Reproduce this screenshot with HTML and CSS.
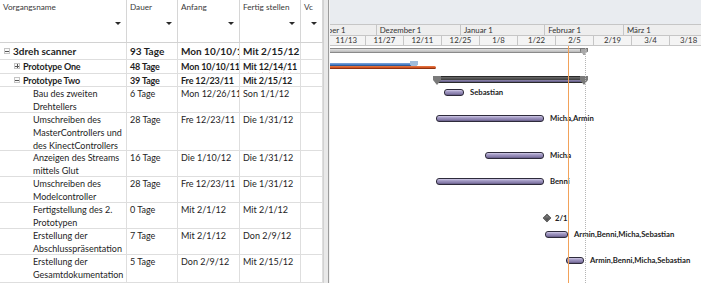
FILE: index.html
```html
<!DOCTYPE html>
<html lang="de">
<head>
    <meta charset="UTF-8">
    <title>3dreh scanner - Gantt</title>
    <link rel="stylesheet" href="styles.css">
</head>
<body>
<div class="app">
    <div class="sheet">
        <div class="row head">
            <div class="cell">Vorgangsname<span class="caret"></span></div>
            <div class="cell">Dauer<span class="caret"></span></div>
            <div class="cell">Anfang<span class="caret"></span></div>
            <div class="cell">Fertig stellen<span class="caret"></span></div>
            <div class="cell">Vc<span class="caret"></span></div>
        </div>
        <div class="row project h-top">
            <div class="cell name lvl0"><span class="toggle minus"></span>3dreh scanner</div>
            <div class="cell">93 Tage</div>
            <div class="cell">Mon 10/10/11</div>
            <div class="cell">Mit 2/15/12</div>
            <div class="cell"></div>
        </div>
        <div class="row summary h-14">
            <div class="cell name lvl1"><span class="toggle plus"></span>Prototype One</div>
            <div class="cell">48 Tage</div>
            <div class="cell">Mon 10/10/11</div>
            <div class="cell"><span class="typo">Mit 12/14/11</span></div>
            <div class="cell"></div>
        </div>
        <div class="row summary h-13">
            <div class="cell name lvl1"><span class="toggle minus"></span>Prototype Two</div>
            <div class="cell">39 Tage</div>
            <div class="cell">Fre 12/23/11</div>
            <div class="cell">Mit 2/15/12</div>
            <div class="cell"></div>
        </div>
        <div class="row h-2">
            <div class="cell name lvl2">Bau des zweiten Drehtellers</div>
            <div class="cell">6 Tage</div>
            <div class="cell">Mon 12/26/11</div>
            <div class="cell">Son 1/1/12</div>
            <div class="cell"></div>
        </div>
        <div class="row h-3">
            <div class="cell name lvl2">Umschreiben des MasterControllers und des KinectControllers</div>
            <div class="cell">28 Tage</div>
            <div class="cell">Fre 12/23/11</div>
            <div class="cell">Die 1/31/12</div>
            <div class="cell"></div>
        </div>
        <div class="row h-2">
            <div class="cell name lvl2">Anzeigen des Streams mittels Glut</div>
            <div class="cell">16 Tage</div>
            <div class="cell">Die 1/10/12</div>
            <div class="cell">Die 1/31/12</div>
            <div class="cell"></div>
        </div>
        <div class="row h-2">
            <div class="cell name lvl2">Umschreiben des Modelcontroller</div>
            <div class="cell">28 Tage</div>
            <div class="cell">Fre 12/23/11</div>
            <div class="cell">Die 1/31/12</div>
            <div class="cell"></div>
        </div>
        <div class="row h-2">
            <div class="cell name lvl2">Fertigstellung des 2. Prototypen</div>
            <div class="cell">0 Tage</div>
            <div class="cell">Mit 2/1/12</div>
            <div class="cell">Mit 2/1/12</div>
            <div class="cell"></div>
        </div>
        <div class="row h-2">
            <div class="cell name lvl2">Erstellung der Abschlusspräsentation</div>
            <div class="cell">7 Tage</div>
            <div class="cell">Mit 2/1/12</div>
            <div class="cell">Don 2/9/12</div>
            <div class="cell"></div>
        </div>
        <div class="row h-last">
            <div class="cell name lvl2">Erstellung der Gesamtdokumentation</div>
            <div class="cell">5 Tage</div>
            <div class="cell">Don 2/9/12</div>
            <div class="cell">Mit 2/15/12</div>
            <div class="cell"></div>
        </div>
    </div>

    <div class="splitter"></div>

    <div class="chart">
        <div class="ts-top"></div>
        <div class="ts-row months">
            <span class="first" style="--days:30">November 1</span>
            <span style="--days:31">Dezember 1</span>
            <span style="--days:31">Januar 1</span>
            <span style="--days:29">Februar 1</span>
            <span style="--days:31">März 1</span>
        </div>
        <div class="ts-row weeks">
            <span class="first">11/13</span>
            <span>11/27</span>
            <span>12/11</span>
            <span>12/25</span>
            <span>1/8</span>
            <span>1/22</span>
            <span>2/5</span>
            <span>2/19</span>
            <span>3/4</span>
            <span>3/18</span>
        </div>

        <div class="gantt">
            <div class="g-row g-first">
                <div class="bar project-bar" style="width:255px"></div>
            </div>
            <div class="g-row h-14">
                <div class="stack">
                    <div class="bar baseline" style="width:84px"></div>
                    <div class="bar actual" style="width:106px"></div>
                </div>
            </div>
            <div class="g-row h-13">
                <div class="bar summary-bar" style="margin-left:106px;width:149px"></div>
            </div>
            <div class="g-row h-2">
                <div class="bar task" style="margin-left:114px;width:20px"></div>
                <span class="tag">Sebastian</span>
            </div>
            <div class="g-row h-3">
                <div class="bar task" style="margin-left:106px;width:108px"></div>
                <span class="tag">Micha,Armin</span>
            </div>
            <div class="g-row h-2 tight">
                <div class="bar task" style="margin-left:155px;width:59px"></div>
                <span class="tag">Micha</span>
            </div>
            <div class="g-row h-2 tight">
                <div class="bar task" style="margin-left:106px;width:108px"></div>
                <span class="tag">Benni</span>
            </div>
            <div class="g-row h-2 milestone-row">
                <div class="milestone" style="margin-left:214px"></div>
                <span class="tag">2/1</span>
            </div>
            <div class="g-row h-2">
                <div class="bar task" style="margin-left:215px;width:23px"></div>
                <span class="tag">Armin,Benni,Micha,Sebastian</span>
            </div>
            <div class="g-row h-last">
                <div class="bar task" style="margin-left:236px;width:18px"></div>
                <span class="tag">Armin,Benni,Micha,Sebastian</span>
            </div>

            <div class="status-line" style="left:238px"></div>
            <div class="finish-line" style="left:255px"></div>
        </div>
    </div>
</div>
</body>
</html>
```

FILE: styles.css
```css
/* Project view: task sheet on the left, gantt chart on the right */
:root {
    --day: 2.717px;          /* timescale: pixels per day */
    --grid: #dedede;
    --scale-line: #c6c6c6;
    --text: #1e1e1e;
    --bar-edge: #2e2b3b;
    --status: #f2a25a;
}

* {
    box-sizing: border-box;
    margin: 0;
    padding: 0;
}

body {
    font-family: Lato, "Liberation Sans", sans-serif;
    font-size: 9px;
    color: var(--text);
    background: #fff;
    overflow: hidden;
}

.app {
    display: flex;
    height: 283px;
}

/* ---------- task sheet ---------- */
.sheet {
    width: 323px;
    flex: none;
}

.row {
    display: grid;
    grid-template-columns: 127px 51px 62px 61px 22px;
    border-bottom: 1px solid var(--grid);
}

.cell {
    border-right: 1px solid var(--grid);
    padding: 0 2px 0 3px;
    line-height: 13px;
    white-space: nowrap;
    overflow: hidden;
}

.head {
    height: 43px;
    color: #3a3a3a;
    border-bottom-color: #d2d2d2;
}

.head .cell {
    display: flex;
    flex-direction: column;
    padding: 2px 3px 0;
    font-size: 8.2px;
    line-height: 11px;
    border-right-color: #d6d6d6;
}

.caret {
    align-self: flex-end;
    width: 0;
    margin: 9px 2px 0 0;
    border-left: 3px solid transparent;
    border-right: 3px solid transparent;
    border-top: 3px solid #2a2a2a;
}

.h-top  { height: 17px; }
.h-14   { height: 14px; }
.h-13   { height: 13px; }
.h-2    { height: 26px; }
.h-3    { height: 38px; }
.h-last { height: 28px; }

.project .cell {
    font-weight: 700;
    font-size: 10px;
    line-height: 17px;
}

.summary .cell {
    font-weight: 700;
    letter-spacing: -0.15px;
}

.name {
    white-space: normal;
}

.lvl0 { padding-left: 4px; }
.lvl1 { padding-left: 14px; }
.lvl2 { padding-left: 33px; }

/* outline +/- boxes */
.toggle {
    position: relative;
    display: inline-block;
    width: 6px;
    height: 6px;
    margin-right: 3px;
    vertical-align: 1px;
    border: 1px solid #c4c4c4;
    background: #fafafa;
}

.toggle::before,
.toggle::after {
    content: '';
    position: absolute;
    background: #555;
}

.toggle::before {
    left: 0;
    right: 0;
    top: 1.5px;
    height: 1px;
}

.plus::after {
    top: 0;
    bottom: 0;
    left: 1.5px;
    width: 1px;
}

.typo {
    text-decoration: underline wavy #e0302c;
    text-decoration-thickness: 1px;
    text-underline-offset: 2px;
}

/* ---------- splitter ---------- */
.splitter {
    width: 7px;
    flex: none;
    background: linear-gradient(to right, #d2d2d2 0 1px, #e9e9e9 1px 5px, #9c9c9c 5px 6px, #f3f3f3 6px);
}

/* ---------- gantt chart ---------- */
.chart {
    flex: 1;
    display: flex;
    flex-direction: column;
    overflow: hidden;
}

.ts-top {
    height: 25px;
    flex: none;
    background: #e9ecf0;
    border-bottom: 1px solid var(--scale-line);
}

.ts-row {
    display: flex;
    flex: none;
    white-space: nowrap;
    font-size: 7.8px;
    color: #333;
    border-bottom: 1px solid var(--scale-line);
}

.ts-row span {
    flex: none;
    border-right: 1px solid var(--scale-line);
}

.months {
    height: 11px;
    background: #eeeeee;
}

.months span {
    width: calc(var(--days) * var(--day));
    padding-left: 3px;
    line-height: 10px;
}

.months .first {
    margin-left: -34.8px;
    padding-left: 8px;
}

.weeks {
    height: 10px;
    background: #f4f4f4;
}

.weeks span {
    width: calc(14 * var(--day));
    text-align: center;
    line-height: 9px;
}

.weeks .first {
    margin-left: -2.2px;
}

.gantt {
    position: relative;
    flex: 1;
}

.g-row {
    display: flex;
    align-items: flex-start;
    padding-top: 2px;
}

.g-first {
    height: 14px;
}

.g-row.tight {
    padding-top: 1px;
}

.bar {
    position: relative;
    flex: none;
}

.tag {
    margin-left: 6px;
    font-size: 7.7px;
    font-weight: 700;
    line-height: 7px;
    color: #222;
}

.task {
    height: 7px;
    border: 1px solid var(--bar-edge);
    border-radius: 3px;
    background: linear-gradient(#d2cce8, #a299c3 35%, #8a80ad 70%, #655c86);
}

/* project summary: thin grey bar with a cap at the end */
.project-bar {
    height: 5px;
    border: 1px solid #8a8a8a;
    border-left: none;
    background: linear-gradient(#e2e2e2, #b9b9b9);
}

.project-bar::after,
.summary-bar::before,
.summary-bar::after,
.baseline::after {
    content: '';
    position: absolute;
    top: -1px;
    width: 8px;
    height: 7px;
    background: #8c8c8c;
    clip-path: polygon(0 0, 100% 0, 100% 45%, 50% 100%, 0 45%);
}

.project-bar::after {
    right: -4px;
    background: #a9a9a9;
    box-shadow: inset 0 0 0 1px #777;
}

.stack {
    display: flex;
    flex-direction: column;
    padding-top: 1px;
}

.baseline {
    height: 3px;
    background: linear-gradient(#7fa8dd, #3f76c2);
    border-bottom: 1px solid #2f5c99;
}

.baseline::after {
    right: -4px;
    top: -2px;
    height: 8px;
    background: #9fbcdb;
}

.actual {
    height: 3px;
    border-radius: 0 2px 2px 0;
    background: linear-gradient(#ea7b45, #c8481a);
    border-bottom: 1px solid #8f3210;
}

.summary-bar {
    height: 7px;
    border: 1px solid #2a2a2a;
    background: linear-gradient(#6c6c6c, #404040 55%, #8f87ae 60%, #5d5680);
}

.summary-bar::before,
.summary-bar::after {
    top: -1px;
    height: 9px;
    background: #7a7a7a;
}

.summary-bar::before { left: -4px; }
.summary-bar::after  { right: -4px; }

.milestone-row {
    padding-top: 3px;
    align-items: center;
}

.milestone {
    flex: none;
    width: 6px;
    height: 6px;
    transform: rotate(45deg);
    background: linear-gradient(135deg, #8a8a8a, #3c3c3c);
    border: 1px solid #333;
}

.milestone + .tag {
    margin-left: 5px;
    line-height: 8px;
}

/* status date and project finish markers */
.status-line {
    position: absolute;
    top: 0;
    bottom: 0;
    width: 1px;
    background: var(--status);
}

.finish-line {
    position: absolute;
    top: 2px;
    bottom: 0;
    border-left: 1px dotted #b5b5b5;
}
```
